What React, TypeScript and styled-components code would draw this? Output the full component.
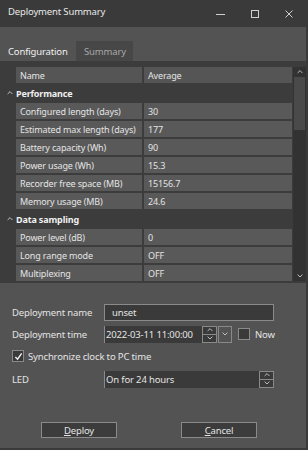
import React, { FC } from 'react'
import styled, { createGlobalStyle } from 'styled-components'

const GlobalStyle = createGlobalStyle`
  html, body {
    margin: 0;
    padding: 0;
    background: #535353;
  }
  * {
    box-sizing: border-box;
  }
`

type Row = { name: string; value: string }
type Group = { title: string; rows: Row[] }

const groups: Group[] = [
  {
    title: 'Performance',
    rows: [
      { name: 'Configured length (days)', value: '30' },
      { name: 'Estimated max length (days)', value: '177' },
      { name: 'Battery capacity (Wh)', value: '90' },
      { name: 'Power usage (Wh)', value: '15.3' },
      { name: 'Recorder free space (MB)', value: '15156.7' },
      { name: 'Memory usage (MB)', value: '24.6' },
    ],
  },
  {
    title: 'Data sampling',
    rows: [
      { name: 'Power level (dB)', value: '0' },
      { name: 'Long range mode', value: 'OFF' },
      { name: 'Multiplexing', value: 'OFF' },
    ],
  },
]

const Chevron: FC<{ dir: 'up' | 'down'; size?: number }> = ({ dir, size = 7 }) => (
  <svg width={size} height={size * 0.6} viewBox="0 0 10 6">
    <path
      d={dir === 'up' ? 'M1 5 L5 1 L9 5' : 'M1 1 L5 5 L9 1'}
      fill="none"
      stroke="#d8d8d8"
      strokeWidth="1.4"
    />
  </svg>
)

const App: FC = () => {
  return (
    <>
      <GlobalStyle />
      <Window>
        <TitleBar>
          <Title>Deployment Summary</Title>
          <Controls>
            <Control>
              <svg width="10" height="10" viewBox="0 0 10 10">
                <path d="M0 5.5 H9" stroke="#d0d0d0" strokeWidth="1" />
              </svg>
            </Control>
            <Control>
              <svg width="10" height="10" viewBox="0 0 10 10">
                <rect x="1.5" y="1.5" width="7" height="7" fill="none" stroke="#d0d0d0" strokeWidth="1" />
              </svg>
            </Control>
            <Control>
              <svg width="10" height="10" viewBox="0 0 10 10">
                <path d="M1.5 1.5 L8.5 8.5 M8.5 1.5 L1.5 8.5" stroke="#d0d0d0" strokeWidth="1" />
              </svg>
            </Control>
          </Controls>
        </TitleBar>

        <Tabs>
          <Tab active>Configuration</Tab>
          <Tab>Summary</Tab>
        </Tabs>

        <Panel>
          <Grid>
            <HeaderCell>Name</HeaderCell>
            <HeaderCell>Average</HeaderCell>
            {groups.map((g) => (
              <React.Fragment key={g.title}>
                <GroupRow>
                  <Chevron dir="up" size={6} />
                  <GroupTitle>{g.title}</GroupTitle>
                </GroupRow>
                {g.rows.map((r) => (
                  <React.Fragment key={r.name}>
                    <Cell>{r.name}</Cell>
                    <Cell>{r.value}</Cell>
                  </React.Fragment>
                ))}
              </React.Fragment>
            ))}
          </Grid>
          <ScrollBar>
            <ScrollButton>
              <Chevron dir="up" size={6} />
            </ScrollButton>
            <Thumb />
            <Track />
            <ScrollButton>
              <Chevron dir="down" size={6} />
            </ScrollButton>
          </ScrollBar>
        </Panel>

        <Form>
          <FormRow>
            <Label>Deployment name</Label>
            <TextBox wide>unset</TextBox>
          </FormRow>
          <FormRow>
            <Label>Deployment time</Label>
            <Field>
              <TextBox>2022-03-11 11:00:00</TextBox>
              <Spinner>
                <SpinPart><Chevron dir="up" size={6} /></SpinPart>
                <SpinPart><Chevron dir="down" size={6} /></SpinPart>
              </Spinner>
            </Field>
            <DropButton>
              <Chevron dir="down" size={6} />
            </DropButton>
            <CheckLabel>
              <CheckBox />
              Now
            </CheckLabel>
          </FormRow>
          <SyncRow>
            <CheckBox>
              <svg width="9" height="9" viewBox="0 0 10 10">
                <path d="M1.5 5.5 L4 8 L8.5 1.5" fill="none" stroke="#f0f0f0" strokeWidth="1.6" />
              </svg>
            </CheckBox>
            Synchronize clock to PC time
          </SyncRow>
          <FormRow>
            <Label>LED</Label>
            <Field>
              <TextBox led>On for 24 hours</TextBox>
              <Spinner>
                <SpinPart><Chevron dir="up" size={6} /></SpinPart>
                <SpinPart><Chevron dir="down" size={6} /></SpinPart>
              </Spinner>
            </Field>
          </FormRow>
        </Form>

        <Buttons>
          <Button>
            <u>D</u>eploy
          </Button>
          <Button>
            <u>C</u>ancel
          </Button>
        </Buttons>
      </Window>
    </>
  )
}

const Window = styled.div`
  width: 308px;
  height: 450px;
  background: #535353;
  border-right: 2px solid #3a3a3a;
  border-bottom: 2px solid #3a3a3a;
  display: flex;
  flex-direction: column;
  font-family: 'Noto Sans', 'Open Sans', sans-serif;
  font-size: 9px;
  letter-spacing: -0.15px;
  color: #e4e4e4;
`

const TitleBar = styled.div`
  height: 27px;
  background: #3a3a3a;
  display: flex;
  align-items: flex-start;
  padding: 5px 0 0 8px;
`

const Title = styled.div`
  font-size: 9.5px;
  flex: 1;
  color: #e8e8e8;
`

const Controls = styled.div`
  display: flex;
  gap: 24px;
  padding: 4px 12px 0 0;
`

const Control = styled.div`
  width: 10px;
  height: 10px;
  display: flex;
`

const Tabs = styled.div`
  display: flex;
  margin-top: 14px;
  height: 20px;
`

const Tab = styled.div<{ active?: boolean }>`
  display: flex;
  align-items: center;
  padding-left: 8px;
  font-size: 9.5px;
  background: ${({ active }) => (active ? '#535353' : '#474747')};
  color: ${({ active }) => (active ? '#f0f0f0' : '#a8a8a8')};
  width: ${({ active }) => (active ? '76px' : '57px')};
`

const Panel = styled.div`
  height: 222px;
  background: #3c3c3c;
  display: flex;
  padding-top: 6px;
`

const Grid = styled.div`
  display: grid;
  grid-template-columns: 126px 148px;
  grid-auto-rows: 16px;
  column-gap: 2px;
  row-gap: 2px;
  margin-left: 16px;
  align-content: start;
`

const Cell = styled.div`
  background: #595959;
  display: flex;
  align-items: center;
  padding-left: 4px;
  white-space: nowrap;
  overflow: hidden;
`

const HeaderCell = styled(Cell)`
  background: #555555;
`

const GroupRow = styled.div`
  grid-column: 1 / -1;
  margin-left: -9px;
  display: flex;
  align-items: center;
  gap: 3px;
`

const GroupTitle = styled.span`
  font-weight: bold;
  color: #f0f0f0;
`

const ScrollBar = styled.div`
  width: 13px;
  margin-left: 1px;
  height: 214px;
  background: #323232;
  display: flex;
  flex-direction: column;
`

const ScrollButton = styled.div`
  height: 10px;
  display: flex;
  align-items: center;
  justify-content: center;
`

const Thumb = styled.div`
  height: 53px;
  margin: 0 1px;
  background: #4a4a4a;
`

const Track = styled.div`
  flex: 1;
`

const Form = styled.div`
  display: flex;
  flex-direction: column;
  gap: 6px;
  padding: 21px 0 0 12px;
`

const FormRow = styled.div`
  display: flex;
  align-items: center;
  height: 16px;
`

const Label = styled.div`
  width: 92px;
  font-size: 9.5px;
`

const Field = styled.div`
  display: flex;
  border: 1px solid #8a8a8a;
  height: 17px;
  background: #3a3a3a;
`

const TextBox = styled.div<{ wide?: boolean; led?: boolean }>`
  display: flex;
  align-items: center;
  height: 17px;
  background: #3a3a3a;
  font-size: 9.5px;
  ${({ wide }) =>
    wide
      ? 'width: 170px; border: 1px solid #8a8a8a; padding-left: 7px;'
      : 'padding-left: 1px;'}
  ${({ led, wide }) => (led ? 'width: 154px; margin-top: -1px;' : wide ? '' : 'width: 97px; margin-top: -1px;')}
`

const Spinner = styled.div`
  width: 14px;
  display: flex;
  flex-direction: column;
  border-left: 1px solid #8a8a8a;
`

const SpinPart = styled.div`
  flex: 1;
  display: flex;
  align-items: center;
  justify-content: center;
  & + & {
    border-top: 1px solid #8a8a8a;
  }
`

const DropButton = styled.div`
  width: 14px;
  height: 17px;
  border: 1px solid #8a8a8a;
  margin-left: 1px;
  display: flex;
  align-items: center;
  justify-content: center;
`

const CheckLabel = styled.div`
  display: flex;
  align-items: center;
  gap: 5px;
  margin-left: 6px;
  font-size: 9.5px;
`

const CheckBox = styled.div`
  width: 12px;
  height: 12px;
  border: 1px solid #8a8a8a;
  background: #3a3a3a;
  display: flex;
  align-items: center;
  justify-content: center;
`

const SyncRow = styled(FormRow)`
  gap: 4px;
  font-size: 9.5px;
  margin-bottom: 1px;
`

const Buttons = styled.div`
  display: flex;
  justify-content: space-between;
  padding: 35px 49px 0 41px;
`

const Button = styled.div`
  width: 76px;
  height: 16px;
  border: 1px solid #8a8a8a;
  background: #3c3c3c;
  display: flex;
  align-items: center;
  justify-content: center;
  font-size: 9.5px;
  & u {
    text-underline-offset: 1px;
  }
`

export default App
